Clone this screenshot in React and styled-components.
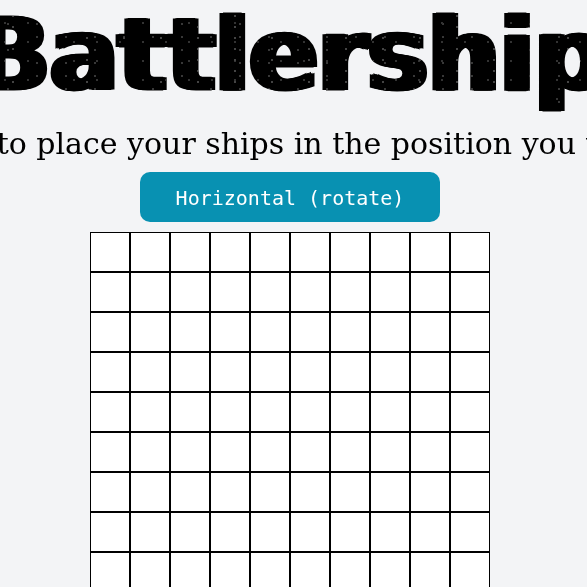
import React from "react";
import styled, { createGlobalStyle } from "styled-components";

const Global = createGlobalStyle`
  * { box-sizing: border-box; }
  body { margin: 0; background: #f3f4f6; overflow: hidden; }
`;

const Page = styled.main`
  display: flex;
  flex-direction: column;
  align-items: center;
  width: calc(100% - 7px);
  height: 100vh;
`;

/* Heavy poster lettering; the overlay scatters pale print specks over the ink. */
const Title = styled.h1`
  position: relative;
  margin: 0;
  padding-bottom: 10px;
  flex: none;
  font: bold 101px/110px "DejaVu Sans", sans-serif;
  white-space: nowrap;
  color: #000;
  -webkit-text-stroke: 1px #000;
  text-shadow: -4px 0 #000, -2px 0 #000, 2px 0 #000, 4px 0 #000;

  &::after {
    content: "";
    position: absolute;
    inset: 0;
    mix-blend-mode: lighten;
    background:
      radial-gradient(circle at 3px 5px, #444 0 1px, transparent 1px) 0 0 / 37px 11px,
      radial-gradient(circle at 9px 4px, #333 0 1px, transparent 1px) 0 0 / 23px 19px,
      radial-gradient(circle at 6px 11px, #383838 0 1px, transparent 1px) 0 0 / 29px 13px;
  }
`;

const Hint = styled.p`
  margin: 0;
  padding: 6px 0;
  flex: none;
  font: 30px/36px "DejaVu Serif", serif;
  white-space: nowrap;
  color: #000;
`;

const RotateButton = styled.button`
  flex: none;
  width: 300px;
  height: 50px;
  margin: 4px 0 10px;
  padding: 2px 0 0;
  border: 0;
  border-radius: 10px;
  background: #0891b2;
  color: #fff;
  font: 20px "DejaVu Sans Mono", monospace;
`;

const Board = styled.div`
  flex: none;
  display: grid;
  grid-template-columns: repeat(10, 40px);
  grid-auto-rows: 40px;
`;

const Cell = styled.div`
  border: 1px solid #000;
  background: #fff;
`;

const cells = Array.from({ length: 100 }, (_, i) => i);

export default function App() {
  return (
    <>
      <Global />
      <Page>
        <Title>Battlership</Title>
        <Hint>Click to place your ships in the position you want.</Hint>
        <RotateButton type="button">Horizontal (rotate)</RotateButton>
        <Board>
          {cells.map((id) => <Cell key={id} />)}
        </Board>
      </Page>
    </>
  );
}
